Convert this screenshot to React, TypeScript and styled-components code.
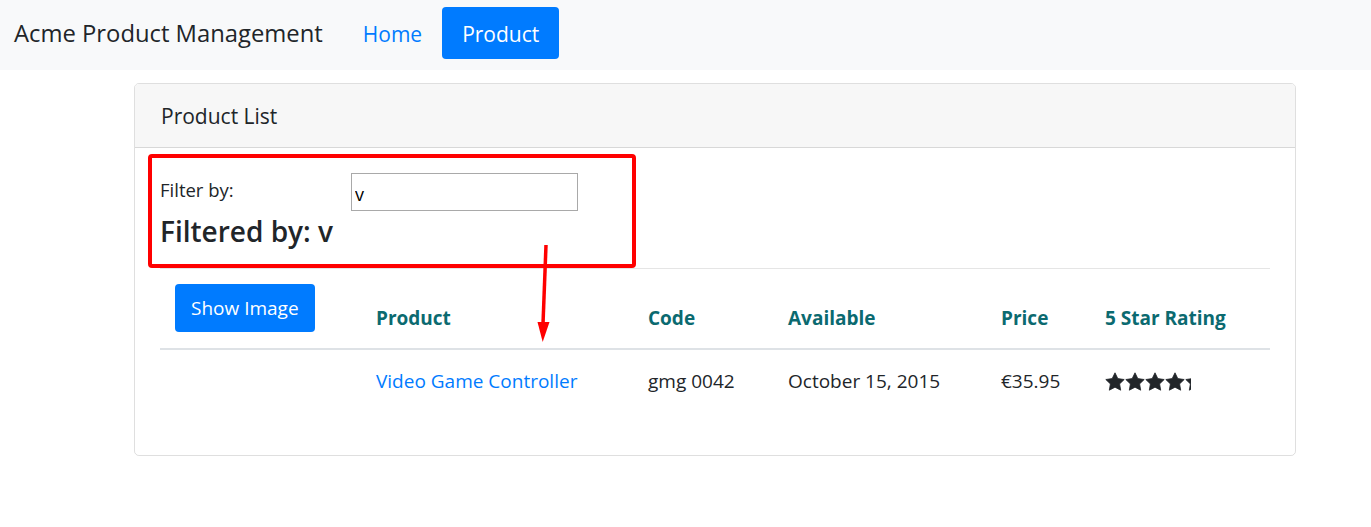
import { createGlobalStyle } from "styled-components";
import styled from "styled-components";

const GlobalStyle = createGlobalStyle`
  body {
    margin: 0;
    font-family: "Open Sans", "Noto Sans", sans-serif;
    color: #212529;
    background: #fff;
  }
`;

const Navbar = styled.nav`
  display: flex;
  align-items: center;
  box-sizing: border-box;
  height: 70px;
  padding: 0 14px 4px;
  background: #f8f9fa;
`;

const Brand = styled.span`
  font-size: 23.8px;
  margin-right: 20px;
  color: #212529;
`;

const NavLink = styled.a<{ $active?: boolean }>`
  display: block;
  font-size: 21px;
  line-height: 34px;
  padding: 10px 20px 8px;
  border-radius: 4px;
  text-decoration: none;
  color: ${(p) => (p.$active ? "#fff" : "#007bff")};
  background: ${(p) => (p.$active ? "#007bff" : "transparent")};
`;

const Page = styled.main`
  padding: 13px 75px 0 134px;
`;

const Card = styled.section`
  border: 1px solid rgba(0, 0, 0, 0.125);
  border-radius: 5px;
  overflow: hidden;
`;

const CardHeader = styled.header`
  height: 63px;
  display: flex;
  align-items: center;
  padding: 0 26px;
  font-size: 21px;
  background: #f7f7f7;
  border-bottom: 1px solid rgba(0, 0, 0, 0.125);
`;

const CardBody = styled.div`
  padding: 25px 25px 0;
`;

const FilterRow = styled.div`
  display: grid;
  grid-template-columns: 191px 227px;
  align-items: center;
`;

const Label = styled.label`
  font-size: 18.5px;
  line-height: 27px;
  margin-top: -6px;
`;

const FilterInput = styled.input`
  box-sizing: border-box;
  width: 227px;
  height: 38px;
  border: 1px solid #a9a9a9;
  padding: 4px 3px 0;
  font-family: "Open Sans", sans-serif;
  font-size: 18px;
  color: #000;
`;

const Heading = styled.h4`
  margin: 4px 0 0;
  font-size: 28px;
  font-weight: 600;
  line-height: 32px;
`;

const Rule = styled.hr`
  margin: 21px 0 0;
  border: 0;
  border-top: 1px solid rgba(0, 0, 0, 0.1);
`;

const Table = styled.table`
  width: 100%;
  border-collapse: collapse;
  table-layout: fixed;
  margin-bottom: 44px;
  font-size: 19px;
`;

const Th = styled.th`
  text-align: left;
  vertical-align: bottom;
  padding: 15px 15px 16px;
  line-height: 27px;
  font-weight: 700;
  color: #0b6a70;
  border-bottom: 2px solid #dee2e6;
`;

const Td = styled.td`
  padding: 18px 15px 16px;
  line-height: 27px;
  vertical-align: middle;
`;

const Button = styled.button`
  display: block;
  height: 48px;
  padding: 0 16px;
  border: 0;
  border-radius: 4px;
  background: #007bff;
  color: #fff;
  font-family: "Open Sans", sans-serif;
  font-size: 19px;
  white-space: nowrap;
`;

const ProductLink = styled.a`
  color: #007bff;
  text-decoration: none;
`;

const Crop = styled.div`
  overflow: hidden;
  height: 20px;
`;

const StarRow = styled.div`
  display: flex;
  width: 100px;
`;

const Overlay = styled.svg`
  position: absolute;
  left: 0;
  top: 0;
  pointer-events: none;
`;

const Star = () => (
  <svg width="20" height="20" viewBox="0 0 20 20">
    <path
      d="M10 0.8l2.8 5.8 6.4.9-4.6 4.4 1.1 6.3L10 15.2l-5.7 3 1.1-6.3-4.6-4.4 6.4-.9z"
      fill="#212529"
      stroke="#212529"
      strokeWidth="0.8"
      strokeLinejoin="round"
    />
  </svg>
);

const StarRating = ({ rating }: { rating: number }) => (
  <Crop style={{ width: `${(rating / 5) * 100}px` }} title={String(rating)}>
    <StarRow>
      {[0, 1, 2, 3, 4].map((i) => (
        <Star key={i} />
      ))}
    </StarRow>
  </Crop>
);

const products = [
  {
    id: 5,
    name: "Video Game Controller",
    code: "gmg 0042",
    available: "October 15, 2015",
    price: "€35.95",
    rating: 4.3,
  },
];

function App() {
  return (
    <>
      <GlobalStyle />
      <Navbar>
        <Brand>Acme Product Management</Brand>
        <NavLink href="#">Home</NavLink>
        <NavLink href="#" $active>
          Product
        </NavLink>
      </Navbar>
      <Page>
        <Card>
          <CardHeader>Product List</CardHeader>
          <CardBody>
            <FilterRow>
              <Label htmlFor="filter">Filter by:</Label>
              <FilterInput id="filter" type="text" defaultValue="v" />
            </FilterRow>
            <Heading>Filtered by: v</Heading>
            <Rule />
            <Table>
              <colgroup>
                <col style={{ width: 201 }} />
                <col style={{ width: 272 }} />
                <col style={{ width: 140 }} />
                <col style={{ width: 213 }} />
                <col style={{ width: 104 }} />
                <col />
              </colgroup>
              <thead>
                <tr>
                  <Th>
                    <Button>Show Image</Button>
                  </Th>
                  <Th>Product</Th>
                  <Th>Code</Th>
                  <Th>Available</Th>
                  <Th>Price</Th>
                  <Th>5 Star Rating</Th>
                </tr>
              </thead>
              <tbody>
                {products.map((p) => (
                  <tr key={p.id}>
                    <Td></Td>
                    <Td>
                      <ProductLink href="#">{p.name}</ProductLink>
                    </Td>
                    <Td>{p.code}</Td>
                    <Td>{p.available}</Td>
                    <Td>{p.price}</Td>
                    <Td>
                      <StarRating rating={p.rating} />
                    </Td>
                  </tr>
                ))}
              </tbody>
            </Table>
          </CardBody>
        </Card>
      </Page>
      {/* red annotation drawn over the screenshot */}
      <Overlay width="1371" height="527">
        <rect x="150" y="156" width="484" height="110" rx="2" fill="none" stroke="#ff0000" strokeWidth="4" />
        <line x1="546" y1="245" x2="543" y2="324" stroke="#ff0000" strokeWidth="3.5" />
        <polygon points="537.5,322 549.5,322 542.7,342" fill="#ff0000" />
      </Overlay>
    </>
  );
}

export default App;
